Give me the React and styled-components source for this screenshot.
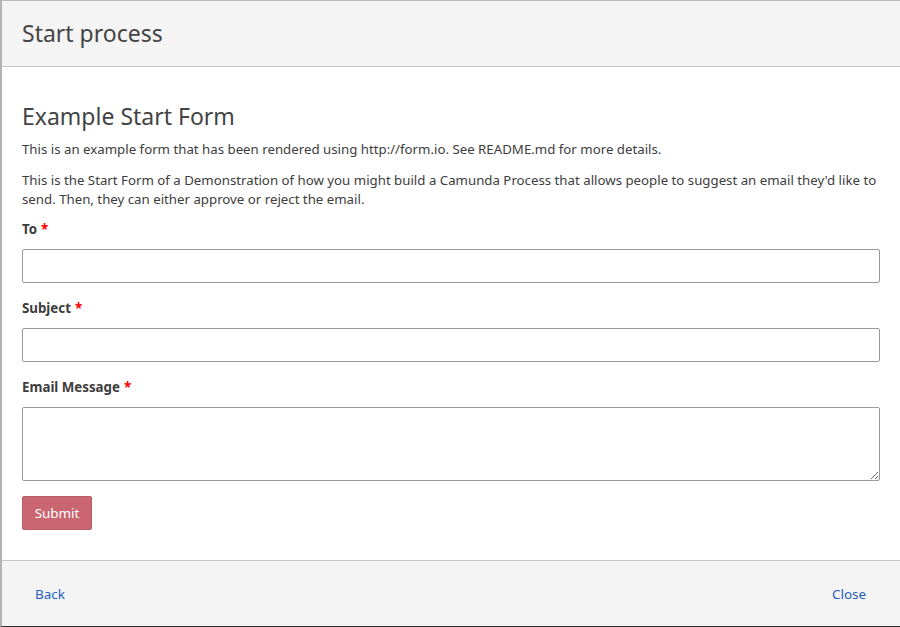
import React from "react";
import styled, { createGlobalStyle } from "styled-components";

const Global = createGlobalStyle`
  html, body { margin: 0; padding: 0; background: #ffffff; }
  body { font-family: "Noto Sans", "Open Sans", sans-serif; color: #393939; }
  * { box-sizing: border-box; }
`;

const Modal = styled.div`
  width: 900px;
  height: 627px;
  display: flex;
  flex-direction: column;
  border-top: 1px solid #b8b8b8;
  border-left: 2px solid #b3b3b3;
  border-bottom: 1px solid #2e2e2e;
  background: #ffffff;
`;

const Header = styled.header`
  height: 66px;
  flex: none;
  background: #f4f4f4;
  border-bottom: 1px solid #c6c6c6;
  display: flex;
  align-items: center;
  padding: 0 20px 2px;
`;

const Title = styled.h1`
  margin: 0;
  font-size: 23px;
  font-weight: 400;
  color: #444444;
`;

const Body = styled.main`
  flex: 1;
  padding: 32px 18px 0 20px;
  display: flex;
  flex-direction: column;
`;

const FormTitle = styled.h2`
  margin: 0 0 7px;
  font-size: 23px;
  font-weight: 400;
  line-height: 34px;
  color: #444444;
`;

const Para = styled.p`
  margin: 0 0 ${(p) => (p.$last ? "11px" : "12px")};
  font-size: 13.25px;
  line-height: 19px;
  color: #3d3d3d;
`;

const Field = styled.div`
  display: flex;
  flex-direction: column;
  margin-bottom: ${(p) => (p.$last ? "15px" : "16px")};
`;

const Label = styled.label`
  font-size: 13.3px;
  font-weight: 700;
  line-height: 19px;
  color: #3d3d3d;
  margin-bottom: 10px;
`;

const Star = styled.span`
  color: #ff0000;
  margin-left: 4px;
`;

const Input = styled.input`
  width: 858px;
  height: 34px;
  border: 1px solid #9a9a9a;
  border-radius: 2px;
  background: #fff;
  font: inherit;
`;

const TextArea = styled.textarea`
  width: 858px;
  height: 74px;
  border: 1px solid #9a9a9a;
  border-radius: 2px;
  background: #fff;
  font: inherit;
  resize: vertical;
`;

const SubmitButton = styled.button`
  align-self: flex-start;
  width: 70px;
  height: 34px;
  background: #c96670;
  border: 1px solid #b85c66;
  border-radius: 2px;
  color: #ffffff;
  font-family: inherit;
  font-size: 13.4px;
  font-weight: 400;
  padding: 0;
`;

const Footer = styled.footer`
  height: 66px;
  flex: none;
  background: #f4f4f4;
  border-top: 1px solid #c6c6c6;
  display: flex;
  align-items: center;
  justify-content: space-between;
  padding: 1px 34px 0 33px;
`;

const LinkButton = styled.a`
  font-size: 13.4px;
  color: #1f5fbf;
  text-decoration: none;
  cursor: pointer;
`;

export default function App() {
  return (
    <>
      <Global />
      <Modal>
        <Header>
          <Title>Start process</Title>
        </Header>
        <Body>
          <FormTitle>Example Start Form</FormTitle>
          <Para>
            This is an example form that has been rendered using http://form.io. See README.md for more details.
          </Para>
          <Para $last>
            This is the Start Form of a Demonstration of how you might build a Camunda Process that allows people to suggest an email they'd like to send. Then, they can either approve or reject the email.
          </Para>
          <Field>
            <Label>
              To<Star>*</Star>
            </Label>
            <Input type="text" />
          </Field>
          <Field>
            <Label>
              Subject<Star>*</Star>
            </Label>
            <Input type="text" />
          </Field>
          <Field $last>
            <Label>
              Email Message<Star>*</Star>
            </Label>
            <TextArea />
          </Field>
          <SubmitButton>Submit</SubmitButton>
        </Body>
        <Footer>
          <LinkButton>Back</LinkButton>
          <LinkButton>Close</LinkButton>
        </Footer>
      </Modal>
    </>
  );
}
